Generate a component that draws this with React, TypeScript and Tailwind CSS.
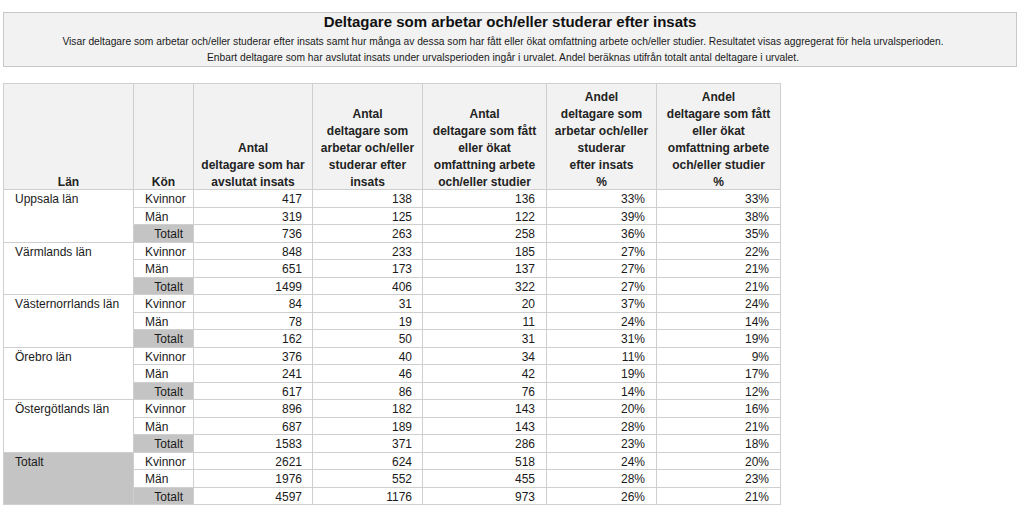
const rows: [string, string[][]][] = [
  ['Uppsala län', [
    ['Kvinnor', '417', '138', '136', '33%', '33%'],
    ['Män', '319', '125', '122', '39%', '38%'],
    ['Totalt', '736', '263', '258', '36%', '35%'],
  ]],
  ['Värmlands län', [
    ['Kvinnor', '848', '233', '185', '27%', '22%'],
    ['Män', '651', '173', '137', '27%', '21%'],
    ['Totalt', '1499', '406', '322', '27%', '21%'],
  ]],
  ['Västernorrlands län', [
    ['Kvinnor', '84', '31', '20', '37%', '24%'],
    ['Män', '78', '19', '11', '24%', '14%'],
    ['Totalt', '162', '50', '31', '31%', '19%'],
  ]],
  ['Örebro län', [
    ['Kvinnor', '376', '40', '34', '11%', '9%'],
    ['Män', '241', '46', '42', '19%', '17%'],
    ['Totalt', '617', '86', '76', '14%', '12%'],
  ]],
  ['Östergötlands län', [
    ['Kvinnor', '896', '182', '143', '20%', '16%'],
    ['Män', '687', '189', '143', '28%', '21%'],
    ['Totalt', '1583', '371', '286', '23%', '18%'],
  ]],
  ['Totalt', [
    ['Kvinnor', '2621', '624', '518', '24%', '20%'],
    ['Män', '1976', '552', '455', '28%', '23%'],
    ['Totalt', '4597', '1176', '973', '26%', '21%'],
  ]],
];

const headers: string[][] = [
  ['Antal', 'deltagare som har', 'avslutat insats'],
  ['Antal', 'deltagare som', 'arbetar och/eller', 'studerar efter', 'insats'],
  ['Antal', 'deltagare som fått', 'eller ökat', 'omfattning arbete', 'och/eller studier'],
  ['Andel', 'deltagare som', 'arbetar och/eller', 'studerar', 'efter insats', '%'],
  ['Andel', 'deltagare som fått', 'eller ökat', 'omfattning arbete', 'och/eller studier', '%'],
];

export default function App() {
  return (
    <div className="w-[1024px] h-[517px] bg-white overflow-hidden font-['Liberation_Sans',Arial,sans-serif] text-[#1a1a1a]">
      {/* Report header */}
      <div className="ml-[3px] mt-[12px] w-[1014px] h-[55px] bg-[#f2f2f2] border border-[#c8c8c8] flex flex-col items-center">
        <h1 className="text-[15px] font-bold leading-[18px] text-[#111]">
          Deltagare som arbetar och/eller studerar efter insats
        </h1>
        <p className="text-[10.25px] leading-[16px] mt-[3px] mr-[14px]">
          Visar deltagare som arbetar och/eller studerar efter insats samt hur många av dessa som har fått eller ökat omfattning arbete och/eller studier. Resultatet visas aggregerat för hela urvalsperioden.
        </p>
        <p className="text-[10.25px] leading-[16px] mr-[14px]">
          Enbart deltagare som har avslutat insats under urvalsperioden ingår i urvalet. Andel beräknas utifrån totalt antal deltagare i urvalet.
        </p>
      </div>

      {/* Table */}
      <table className="ml-[3px] mt-[16px] border-collapse table-fixed w-[777px] text-[12px]">
        <colgroup>
          <col className="w-[130px]" />
          <col className="w-[60px]" />
          <col className="w-[119px]" />
          <col className="w-[110px]" />
          <col className="w-[124px]" />
          <col className="w-[110px]" />
          <col className="w-[124px]" />
        </colgroup>
        <thead>
          <tr className="h-[106px] bg-[#f2f2f2]">
            <th className="border border-[#cfcfcf] align-bottom font-bold leading-[17px] p-0 text-[#222]">
              <div className="translate-y-[2px]">Län</div>
            </th>
            <th className="border border-[#cfcfcf] align-bottom font-bold leading-[17px] p-0 text-[#222]">
              <div className="translate-y-[2px]">Kön</div>
            </th>
            {headers.map((h, i) => (
              <th key={i} className="border border-[#cfcfcf] align-bottom font-bold leading-[17px] p-0 text-[#222]">
                <div className="translate-y-[2px]">
                  {h.map((line, j) => (
                    <div key={j}>{line}</div>
                  ))}
                </div>
              </th>
            ))}
          </tr>
        </thead>
        <tbody>
          {rows.map(([lan, group]) =>
            group.map((r, k) => (
              <tr key={lan + k} className="h-[17.5px] leading-[14.5px]">
                {k === 0 && (
                  <td
                    rowSpan={3}
                    className={
                      lan === 'Totalt'
                        ? 'border border-[#cfcfcf] align-top pl-[11px] pt-[2px] pb-0 bg-[#c4c4c4]'
                        : 'border border-[#cfcfcf] align-top pl-[11px] pt-[2px] pb-0 bg-white'
                    }
                  >
                    {lan}
                  </td>
                )}
                <td
                  className={
                    r[0] === 'Totalt'
                      ? 'border border-[#cfcfcf] bg-[#c4c4c4] text-right pr-[10px] pt-[2px] pb-0'
                      : 'border border-[#cfcfcf] pl-[11px] pt-[2px] pb-0'
                  }
                >
                  {r[0]}
                </td>
                {r.slice(1).map((v, j) => (
                  <td
                    key={j}
                    className={
                      j < 2
                        ? 'border border-[#cfcfcf] text-right pr-[10px] pt-[2px] pb-0'
                        : 'border border-[#cfcfcf] text-right pr-[11px] pt-[2px] pb-0'
                    }
                  >
                    {v}
                  </td>
                ))}
              </tr>
            ))
          )}
        </tbody>
      </table>
    </div>
  );
}
